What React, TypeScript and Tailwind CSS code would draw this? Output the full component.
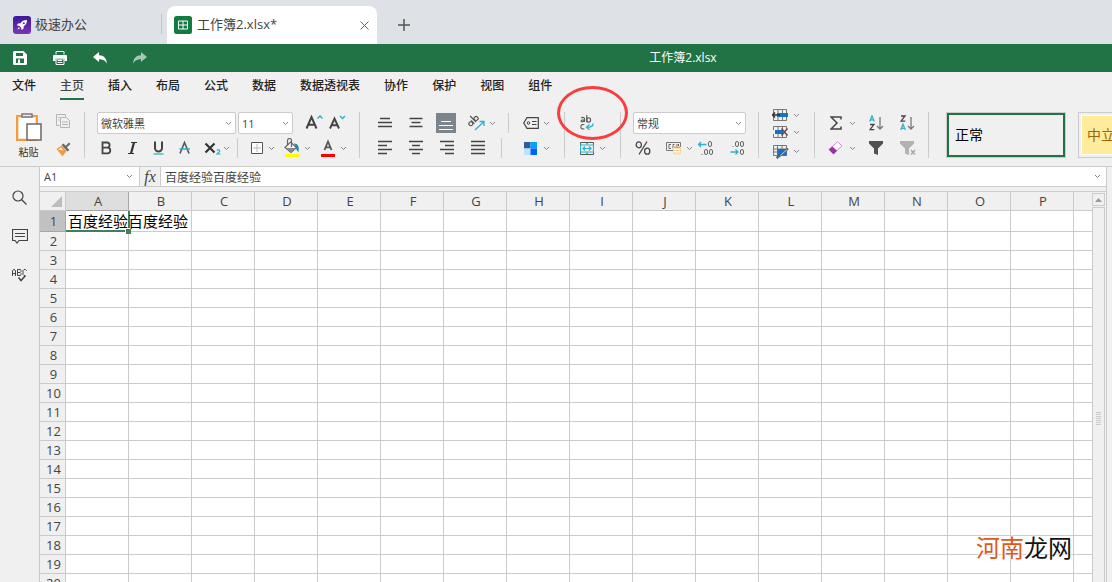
import type { ReactNode } from "react";

const menus = ["文件", "主页", "插入", "布局", "公式", "数据", "数据透视表", "协作", "保护", "视图", "组件"];
const columns = "ABCDEFGHIJKLMNOP".split("");
const rows = Array.from({ length: 20 }, (_, i) => i + 1);

function Chevron() {
  return (
    <svg className="h-[5px] w-[7px] shrink-0" viewBox="0 0 7 5" fill="none" stroke="#858585">
      <path d="M1 1l2.5 2.5L6 1" />
    </svg>
  );
}

function Separator({ short = false }: { short?: boolean }) {
  return <div className={short ? "h-5 w-px shrink-0 bg-[#cbcbcb]" : "h-[46px] w-px shrink-0 bg-[#cbcbcb]"} />;
}

function Tool({ label, className, children }: { label: string; className: string; children: ReactNode }) {
  return (
    <button type="button" aria-label={label} title={label} className={`flex shrink-0 items-center justify-center ${className}`}>
      {children}
    </button>
  );
}

/* icon plus its drop-down arrow */
function DropTool({ label, children }: { label: string; children: ReactNode }) {
  return (
    <button type="button" aria-label={label} title={label} className="flex w-7 shrink-0 items-center justify-between">
      {children}
      <Chevron />
    </button>
  );
}

function Picker({ label, options, className }: { label: string; options: string[]; className: string }) {
  return (
    <div className={`flex h-[22px] shrink-0 items-center rounded-xs border border-[#cbcbcb] bg-white pr-[3px] ${className}`}>
      <select aria-label={label} className="h-5 min-w-0 flex-1 appearance-none bg-transparent pt-px pl-[3px] text-[11px] leading-5 text-[#444] outline-none">
        {options.map((o) => (
          <option key={o}>{o}</option>
        ))}
      </select>
      <Chevron />
    </div>
  );
}

function Lines({ d, light = false }: { d: string; light?: boolean }) {
  return (
    <svg className="size-4" viewBox="0 0 16 16" fill="none" stroke={light ? "#fff" : "#444"} strokeWidth={light ? 1 : 1.3}>
      <path d={d} />
    </svg>
  );
}

function TabStrip() {
  return (
    <div className="flex h-11 items-end bg-[#dee1e6] text-[13px] text-[#444]">
      <div className="flex h-[38px] w-[161px] shrink-0 items-center gap-1 pl-[13px]">
        <svg className="size-[18px]" viewBox="0 0 18 18">
          <defs>
            <linearGradient id="brand" x1="0" y1="0" x2="0" y2="1">
              <stop offset="0" stopColor="#38189a" />
              <stop offset="1" stopColor="#7b35b5" />
            </linearGradient>
          </defs>
          <rect width="18" height="18" rx="3" fill="url(#brand)" />
          <path d="M14 4c-3 0-5 1-6.500 3.200L5 7.500 3.800 9.500l2.400.2 2 2L8.500 14l2-1.300.3-2.500C13 8.800 14 7 14 4z" fill="#fff" />
          <path d="M5.800 11L4.300 13.700 7 12.200z" fill="#fff" />
          <circle cx="10.800" cy="7.200" r="1" fill="#5a28a6" />
        </svg>
        <span>极速办公</span>
      </div>
      <div className="mb-[10px] h-5 w-px bg-[#bfc2c6]" />
      <div className="ml-[5px] flex h-[38px] w-[210px] shrink-0 items-center rounded-t-lg bg-white px-[7px]">
        <svg className="size-[18px]" viewBox="0 0 18 18">
          <rect width="18" height="18" rx="2.500" fill="#107c41" />
          <path d="M4.500 5h9v8h-9zM9 5v8M4.500 9h9" fill="none" stroke="#fff" />
        </svg>
        <span className="ml-[5px] flex-1">工作簿2.xlsx*</span>
        <button type="button" aria-label="关闭" className="flex w-3 justify-center">
          <svg className="size-[9px]" viewBox="0 0 9 9" stroke="#666" fill="none">
            <path d="M.5.5l8 8M8.500.5l-8 8" />
          </svg>
        </button>
      </div>
      <button type="button" aria-label="新建" className="ml-5 flex h-[38px] w-[14px] items-center justify-center">
        <svg className="size-3" viewBox="0 0 12 12" stroke="#555" strokeWidth="1.500">
          <path d="M6 0v12M0 6h12" />
        </svg>
      </button>
    </div>
  );
}

function TitleBar() {
  return (
    <div className="flex h-7 items-center bg-[#217346] text-white">
      <div className="flex w-[254px] shrink-0">
        <Tool label="保存" className="w-10">
          <svg className="size-[14px]" viewBox="0 0 14 14" fill="#fff">
            <path fillRule="evenodd" d="M1.500 0h9L14 3.500v9a1.500 1.500 0 0 1-1.500 1.500h-11A1.500 1.500 0 0 1 0 12.500v-11A1.500 1.500 0 0 1 1.500 0zM3 2v3h7V2zM3 7.500V12h2V8.500h2V12h4V7.500z" />
          </svg>
        </Tool>
        <Tool label="打印" className="w-10">
          <svg className="size-[14px]" viewBox="0 0 14 14">
            <path d="M3 3.500V.5h8v3" fill="none" stroke="#fff" />
            <path d="M0 5a1 1 0 0 1 1-1h12a1 1 0 0 1 1 1v5h-2.500V7.500h-9V10H0z" fill="#fff" />
            <path d="M3 8h8v5.500H3zM4.500 9.500h4.500M4.500 11.500h5" fill="none" stroke="#fff" />
          </svg>
        </Tool>
        <Tool label="撤销" className="w-10">
          <svg className="h-3 w-[14px]" viewBox="0 0 14 12" fill="#fff">
            <path d="M0 5l6-5v3.200c5 0 7.500 3 8 8.300C12 8.500 10 7.200 6 7.200V10z" />
          </svg>
        </Tool>
        <Tool label="恢复" className="w-10 opacity-60">
          <svg className="h-3 w-[14px]" viewBox="0 0 14 12" fill="#fff">
            <path d="M14 5L8 0v3.200C3 3.200.5 6.200 0 11.500 2 8.500 4 7.200 8 7.200V10z" />
          </svg>
        </Tool>
      </div>
      <h1 className="flex-1 text-center text-xs">工作簿2.xlsx</h1>
    </div>
  );
}

function MenuBar() {
  return (
    <nav className="flex h-8 gap-6 px-3 text-xs font-medium text-[#222]">
      {menus.map((m) => (
        <button
          key={m}
          type="button"
          className={
            m === "主页"
              ? "h-7 shrink-0 border-b-2 border-[#217346] pt-[2px] text-[#444]"
              : "h-7 shrink-0 border-b-2 border-transparent pt-[2px]"
          }
        >
          {m}
        </button>
      ))}
    </nav>
  );
}

function ClipboardGroup() {
  return (
    <div className="flex h-[50px] w-[84px] shrink-0 pl-[14px]">
      <button type="button" className="flex w-[29px] flex-col items-center text-[10px] leading-[18px] text-[#333]">
        <svg className="h-[31px] w-7 shrink-0" viewBox="0 0 28 31" fill="none">
          <path d="M2 4h20v24H2z" fill="#fff" stroke="#f09a4a" strokeWidth="2" />
          <path d="M3.500 5.500h17v21h-17z" stroke="#fbe3b5" />
          <path d="M7 5V2h10v3z" fill="#f0f0f0" stroke="#777" strokeWidth="1.500" />
          <path d="M12 12h14v16H12z" fill="#fff" stroke="#6a6a6a" strokeWidth="1.500" />
        </svg>
        粘贴
      </button>
      <div className="ml-3 flex flex-col gap-[10px]">
        <Tool label="复制" className="h-[18px] w-4">
          <svg className="h-[15px] w-4" viewBox="0 0 16 15" fill="none" stroke="#b5b5b5">
            <path d="M4.500 11.500h-3v-11h9v2" />
            <path d="M5.500 3.500h6l3 3v7h-9zM7 8h6M7 10.500h6M3 3.500h1.500M3 6h1.500" />
          </svg>
        </Tool>
        <Tool label="格式刷" className="h-[18px] w-4">
          <svg className="size-[15px]" viewBox="0 0 15 15">
            <path d="M.5 7l5-3.500 5 5.500-4 5.500z" fill="#f39a41" />
            <path d="M2 7.500l3-2 2.500 3z" fill="#fff3df" />
            <path d="M5.500 3l6 6.500 1.800-1.600-2.400-2.700L14.500 2 13 .5 9.700 3.700 7.500 1.500z" fill="#6a6a6a" />
          </svg>
        </Tool>
      </div>
    </div>
  );
}

function FontGroup() {
  return (
    <div className="flex w-[274px] shrink-0 flex-col gap-[3px] pl-3">
      <div className="flex h-[22px] items-center">
        <Picker label="字体" options={["微软雅黑", "宋体", "黑体"]} className="w-[139px]" />
        <Picker label="字号" options={["11", "12", "14"]} className="ml-[2px] w-[55px]" />
        <Tool label="增大字号" className="ml-[11px] w-5">
          <svg className="h-4 w-[18px]" viewBox="0 0 18 16" fill="none">
            <path d="M1.500 13.500L6.500 2l5 11.500M3.200 9.800h6.600" stroke="#444" strokeWidth="2" />
            <path d="M12.500 3.500L15 1l2.500 2.500" stroke="#2bb3c9" strokeWidth="1.500" />
          </svg>
        </Tool>
        <Tool label="减小字号" className="ml-[3px] w-5">
          <svg className="h-4 w-[18px]" viewBox="0 0 18 16" fill="none">
            <path d="M2 13.500L6.500 3.500 11 13.500M3.500 10.300h6" stroke="#444" strokeWidth="1.900" />
            <path d="M12 1l2.500 2.500L17 1" stroke="#2bb3c9" strokeWidth="1.500" />
          </svg>
        </Tool>
      </div>
      <div className="flex h-[22px] items-center">
        <Tool label="加粗" className="w-[18px]">
          <svg className="size-[14px]" viewBox="0 0 14 14" fill="none" stroke="#444" strokeWidth="1.800">
            <path d="M3.500 1.500H8a2.500 2.500 0 0 1 0 5.200H3.500zM3.500 6.700h5a2.800 2.800 0 0 1 0 5.600h-5z" />
          </svg>
        </Tool>
        <Tool label="倾斜" className="ml-2 w-[18px]">
          <svg className="size-[14px]" viewBox="0 0 14 14" fill="none" stroke="#333">
            <path d="M6 1.500h6M3 12.500h6" />
            <path d="M9 1.500l-3 11" strokeWidth="2.200" />
          </svg>
        </Tool>
        <Tool label="下划线" className="ml-2 w-[18px]">
          <svg className="size-[14px]" viewBox="0 0 14 14" fill="none">
            <path d="M4 .5v6.500a3.500 3.500 0 0 0 7 0V.5" stroke="#444" strokeWidth="2" />
            <path d="M2.500 13h10" stroke="#2bb3c9" strokeWidth="1.300" />
          </svg>
        </Tool>
        <Tool label="删除线" className="ml-2 w-[18px]">
          <svg className="size-[14px]" viewBox="0 0 14 14" fill="none">
            <path d="M3 12.500L7.500 1.500 12 12.500" stroke="#555" strokeWidth="1.600" />
            <path d="M2.500 8h10.500" stroke="#2bb3c9" strokeWidth="1.500" />
          </svg>
        </Tool>
        <button type="button" aria-label="下标" className="ml-[11px] flex w-[26px] items-center justify-between">
          <svg className="h-[14px] w-[18px]" viewBox="0 0 18 14" fill="none">
            <path d="M1.500 2.500l9 9M10.500 2.500l-9 9" stroke="#333" strokeWidth="2.200" />
            <path d="M13 9.500c1-1.200 3-.6 2.700.7-.2.900-1.700 1.600-2.700 2.800h3.500" stroke="#2bb3c9" strokeWidth="1.200" />
          </svg>
          <Chevron />
        </button>
        <div className="ml-[7px]">
          <Separator short />
        </div>
        <button type="button" aria-label="边框" className="ml-[13px] flex w-6 items-center justify-between">
          <svg className="size-3" viewBox="0 0 12 12" fill="none">
            <path d="M.5.5h11v11H.5z" fill="#fff" stroke="#555" />
            <path d="M6 2v8M2 6h8" stroke="#bbb" />
          </svg>
          <Chevron />
        </button>
        <button type="button" aria-label="填充颜色" className="ml-[9px] flex w-[27px] items-center justify-between">
          <svg className="h-5 w-4 shrink-0" viewBox="0 0 16 20" fill="none">
            <path d="M1 16h14v3H1z" fill="#ff0" />
            <path d="M1 9.500L6.500 4l6 5.500L7 14.500z" fill="#f2f2f2" stroke="#666" strokeWidth="1.200" />
            <path d="M2 10h9.500L7 14z" fill="#888" />
            <path d="M3.500 7V2.500a2 2 0 0 1 4 0V9" stroke="#666" strokeWidth="1.200" />
            <path d="M10 5.500c4 0 5.500 3 4.500 8.500-1.500-1-2.500-3-2.500-5z" fill="#1a8a9c" />
          </svg>
          <Chevron />
        </button>
        <button type="button" aria-label="字体颜色" className="ml-[10px] flex w-[26px] items-center justify-between">
          <svg className="h-5 w-[14px]" viewBox="0 0 14 20" fill="none">
            <path d="M3.500 12L7 3.500l3.500 8.500M4.500 9.300h5" stroke="#555" strokeWidth="1.800" />
            <path d="M0 16h14v3H0z" fill="red" />
          </svg>
          <Chevron />
        </button>
      </div>
    </div>
  );
}

function AlignGroup() {
  return (
    <div className="flex w-[163px] shrink-0 flex-col gap-[3px] pl-[15px]">
      <div className="flex h-[22px] items-center">
        <Tool label="顶端对齐" className="w-5">
          <Lines d="M3 3.500h10M1 7.500h14M1 11.500h14" />
        </Tool>
        <Tool label="垂直居中" className="ml-[11px] w-5">
          <Lines d="M1.500 3.500h13M3.500 7.500h9M1.500 11.500h13" />
        </Tool>
        <Tool label="底端对齐" className="ml-[10px] size-5 bg-[#7d858c]">
          <Lines light d="M3 6.500h10M1 10.500h14M1 14.500h14" />
        </Tool>
        <button type="button" aria-label="方向" className="ml-3 flex w-7 items-center justify-between">
          <svg className="h-4 w-[17px]" viewBox="0 0 17 16" fill="none">
            <g transform="rotate(-45 6 7)" stroke="#555" strokeWidth="1.200">
              <circle cx="2.500" cy="6" r="2" />
              <path d="M5 3.700v4.800M7.500 0v8.500" />
              <circle cx="10" cy="6" r="2" />
            </g>
            <path d="M7 15l8.500-8M11.500 6.500h4.500V11" stroke="#2bb3c9" strokeWidth="1.300" />
          </svg>
          <Chevron />
        </button>
        <div className="ml-3">
          <Separator short />
        </div>
      </div>
      <div className="flex h-[22px] items-center">
        <Tool label="左对齐" className="w-5">
          <Lines d="M1 1.500h14M1 5.500h9M1 9.500h14M1 13.500h9" />
        </Tool>
        <Tool label="居中" className="ml-[11px] w-5">
          <Lines d="M1 1.500h14M4 5.500h8M1 9.500h14M4 13.500h8" />
        </Tool>
        <Tool label="右对齐" className="ml-[11px] w-5">
          <Lines d="M1 1.500h14M6 5.500h9M1 9.500h14M6 13.500h9" />
        </Tool>
        <Tool label="两端对齐" className="ml-[11px] w-5">
          <Lines d="M1 1.500h14M1 5.500h14M1 9.500h14M1 13.500h14" />
        </Tool>
        <div className="ml-[13px]">
          <Separator short />
        </div>
      </div>
    </div>
  );
}

function FormatGroup() {
  return (
    <div className="flex w-[41px] shrink-0 flex-col gap-[3px]">
      <button type="button" aria-label="单元格样式" className="flex h-[22px] w-[27px] items-center justify-between">
        <svg className="h-3 w-4" viewBox="0 0 16 12" fill="none" stroke="#444">
          <path d="M.7 6L4 .7h11.300v10.600H4z" strokeWidth="1.200" />
          <circle cx="5.500" cy="6" r="1.300" />
          <path d="M9 4.500h4.500M9 7.500h4.500" />
        </svg>
        <Chevron />
      </button>
      <button type="button" aria-label="配色" className="flex h-[22px] w-[27px] items-center justify-between">
        <svg className="ml-px h-[13px] w-[13px]" viewBox="0 0 13 13">
          <path d="M0 0h6.500v6.500H0z" fill="#2c5ba0" />
          <path d="M6.500 0H13v6.500H6.500z" fill="#00a2ff" />
          <path d="M0 6.500h6.500V13H0z" fill="#b9e2ff" />
          <path d="M6.500 6.500H13V13H6.500z" fill="#0063ff" />
        </svg>
        <Chevron />
      </button>
    </div>
  );
}

function WrapGroup() {
  return (
    <div className="relative flex w-[55px] shrink-0 flex-col gap-[3px] pl-[15px]">
      <Tool label="自动换行" className="h-[22px] w-[14px]">
        <svg className="h-4 w-[14px]" viewBox="0 0 14 16" fill="none">
          <g stroke="#555" strokeWidth="1.100">
            <path d="M1.300 3c.9-.9 3.200-.8 3.200.7V7M4.500 4.800c-4-.2-4.200 2.300-1.900 2 .9-.1 1.900-.9 1.900-1.700M6.800 0v7.200" />
            <ellipse cx="8.700" cy="4.900" rx="1.900" ry="2.200" />
            <path d="M4.300 9.800c-1.900-.8-3.500.2-3.500 2s1.700 2.800 3.500 1.900" />
          </g>
          <path d="M13 8.500c.3 2.500-2 3.800-6.500 3.800M9.500 9.500l-3 2.800 3 2.500" stroke="#2bb3c9" strokeWidth="1.300" />
        </svg>
      </Tool>
      <button type="button" aria-label="合并居中" className="flex h-[22px] w-[26px] items-center justify-between">
        <svg className="h-[13px] w-[14px]" viewBox="0 0 14 13" fill="none">
          <path d="M.5.5h13v12H.5zM7 .5v2M7 10.500v2" stroke="#555" />
          <path d="M.5 3h13v7H.5zM3 6.500h8M5 4.500l-2 2 2 2M9 4.500l2 2-2 2" stroke="#2bb3c9" strokeWidth="1.200" />
        </svg>
        <Chevron />
      </button>
      {/* callout ring round the wrap button */}
      <div className="pointer-events-none absolute -top-[26px] -left-[8px] h-[54px] w-[71px] rounded-[50%] border-3 border-[#fa3c3c]" />
    </div>
  );
}

function NumberGroup() {
  return (
    <div className="flex w-[137px] shrink-0 flex-col gap-[3px] pl-3">
      <Picker label="数字格式" options={["常规", "数值", "货币"]} className="w-[113px]" />
      <div className="flex h-[22px] items-center">
        <Tool label="百分比" className="ml-[2px] w-4">
          <svg className="h-[14px] w-4" viewBox="0 0 16 14" fill="none" stroke="#444" strokeWidth="1.300">
            <ellipse cx="3.800" cy="3.800" rx="2.600" ry="3" />
            <ellipse cx="12.200" cy="10.200" rx="2.600" ry="3" />
            <path d="M12 .5l-8 13" />
          </svg>
        </Tool>
        <button type="button" aria-label="货币" className="ml-[15px] flex w-[27px] items-center justify-between">
          <svg className="h-[14px] w-4" viewBox="0 0 16 14" fill="none">
            <path d="M.5 1.500h14v8H.5z" stroke="#777" />
            <path d="M5 3.500H3v4h2M8.500 3.500H7v4h1.500M11 3v3M12.500 3v2" stroke="#666" />
            <path d="M7.500 6h7v7h-7z" fill="#fff" stroke="#f7d9a6" />
            <path d="M8 6.500h6" stroke="#f59a20" strokeWidth="1.500" />
            <path d="M8 9.500h6M8 12h6" stroke="#f8cf8d" />
          </svg>
          <Chevron />
        </button>
        <Tool label="增加小数位" className="ml-[5px] w-4">
          <svg className="h-4 w-4" viewBox="0 0 16 16" fill="none" stroke="#666">
            <rect x="10.500" y="1.500" width="3" height="5" rx="1.500" />
            <rect x="6.500" y="9.500" width="3" height="5" rx="1.500" />
            <rect x="11.500" y="9.500" width="3" height="5" rx="1.500" />
            <path d="M3.500 14.500h1" />
            <path d="M.5 4.500H8.500M3 2L.5 4.500 3 7" stroke="#2bb3c9" strokeWidth="1.300" />
          </svg>
        </Tool>
        <Tool label="减少小数位" className="ml-[15px] w-4">
          <svg className="h-4 w-4" viewBox="0 0 16 16" fill="none" stroke="#666">
            <rect x="6.500" y="1.500" width="3" height="5" rx="1.500" />
            <rect x="11.500" y="1.500" width="3" height="5" rx="1.500" />
            <rect x="11.500" y="9.500" width="3" height="5" rx="1.500" />
            <path d="M3.500 6.500h1" />
            <path d="M1.500 12H9M6.500 9.500L9 12l-2.500 2.500" stroke="#2bb3c9" strokeWidth="1.300" />
          </svg>
        </Tool>
      </div>
    </div>
  );
}

function CellsGroup() {
  return (
    <div className="-mt-1 flex w-[55px] shrink-0 flex-col gap-[3px] pl-[13px]">
      <button type="button" aria-label="插入单元格" className="flex h-[14px] w-7 items-center justify-between">
        <svg className="h-3 w-[17px]" viewBox="0 0 17 12" fill="none">
          <path d="M1.500.5h13v11h-13zM6 .5v11M10.500 .5v11" stroke="#777" />
          <path d="M5 4h11v4H5z" fill="#1672c8" />
          <path d="M0 6h8M3 3.500L.5 6 3 8.500" stroke="#333" strokeWidth="1.500" />
        </svg>
        <Chevron />
      </button>
      <button type="button" aria-label="删除单元格" className="flex h-[14px] w-7 items-center justify-between">
        <svg className="h-3 w-[17px]" viewBox="0 0 17 12" fill="none">
          <path d="M1.500 4V.5h13V4M6 .5V4M10.500 .5V4M1.500 8v3.500h13V8M6 8v3.500M10.500 8v3.500" stroke="#777" />
          <path d="M3 4h8v4H3z" fill="#1672c8" />
          <path d="M9.500 2.500l6 7M15.500 2.500l-6 7" stroke="#704848" strokeWidth="1.500" />
        </svg>
        <Chevron />
      </button>
      <button type="button" aria-label="格式" className="mt-px flex h-4 w-7 items-center justify-between">
        <svg className="h-[15px] w-[17px]" viewBox="0 0 17 15" fill="none">
          <path d="M1.500 1.500h13v10h-13zM5.500 1.500v10M10 1.500v10M1.500 5h13M1.500 8h13" stroke="#777" />
          <path d="M5.500 5h9v6.500h-9z" fill="#1672c8" />
          <path d="M16 4.500L9 11l-4.500 3" stroke="#4a6478" strokeWidth="2.200" />
          <path d="M15 5.500L8.500 11.500" stroke="#b8d4ea" />
        </svg>
        <Chevron />
      </button>
    </div>
  );
}

function SortIcon({ flip = false }: { flip?: boolean }) {
  const a = "M.7 6.500L3 .8l2.300 5.700M1.500 4.800h3";
  const z = "M1 1h4L1 6.200h4.300";
  return (
    <svg className="h-4 w-[15px]" viewBox="0 0 15 16" fill="none" strokeWidth="1.300">
      <path d={flip ? z : a} stroke={flip ? "#444" : "#2bb3c9"} />
      <path d={flip ? a : z} transform="translate(0 8.500)" stroke={flip ? "#2bb3c9" : "#444"} />
      <path d="M11 2v12M8 11l3 3 3-3" stroke="#777" />
    </svg>
  );
}

function EditGroup() {
  return (
    <div className="flex w-[113px] shrink-0 flex-col gap-[3px] pl-[13px]">
      <div className="flex h-[22px] items-center">
        <DropTool label="求和">
          <svg className="ml-[2px] h-[14px] w-3" viewBox="0 0 12 14" fill="none" stroke="#444" strokeWidth="1.500">
            <path d="M11 3.500V1H1l6 6-6 6h10v-2.500" />
          </svg>
        </DropTool>
        <Tool label="升序" className="ml-[13px] w-[15px]">
          <SortIcon />
        </Tool>
        <Tool label="降序" className="ml-4 w-[15px]">
          <SortIcon flip />
        </Tool>
      </div>
      <div className="flex h-[22px] items-center">
        <DropTool label="清除">
          <svg className="h-[14px] w-[15px]" viewBox="0 0 15 14">
            <path d="M1 8.500L9.500.8l4.500 4L5.500 13z" fill="#fff" stroke="#d18ad6" />
            <path d="M.8 8.500l3.500-3 4.800 4.200-3.600 3.600z" fill="#9b2fa3" />
          </svg>
        </DropTool>
        <Tool label="筛选" className="ml-3 w-[15px]">
          <svg className="size-[14px]" viewBox="0 0 14 14" fill="#505050">
            <path d="M0 0h14v2.500L9 7.500V14L5 12.500v-5L0 2.500z" />
          </svg>
        </Tool>
        <Tool label="清除筛选" className="ml-4 w-[17px]">
          <svg className="h-[14px] w-4" viewBox="0 0 16 14" fill="#b2b2b2">
            <path d="M0 0h14v2.500L9 7.500V14L5 12.500v-5L0 2.500z" />
            <path d="M11 9l4 4.500M15 9l-4 4.500" stroke="#a5a5a5" strokeWidth="1.300" />
          </svg>
        </Tool>
      </div>
    </div>
  );
}

function Ribbon() {
  return (
    <div className="flex h-[63px] items-start border-b border-[#cbcbcb] pt-2">
      <ClipboardGroup />
      <Separator />
      <FontGroup />
      <Separator />
      <AlignGroup />
      <FormatGroup />
      <Separator />
      <WrapGroup />
      <Separator />
      <NumberGroup />
      <Separator />
      <CellsGroup />
      <Separator />
      <EditGroup />
      <Separator />
      <div className="ml-[17px] flex gap-3 text-sm">
        <button type="button" className="h-[46px] w-[120px] shrink-0 border border-[#cbcbcb] text-left text-black">
          <span className="flex h-11 items-center border-2 border-[#217346] pl-[6px]">正常</span>
        </button>
        <button type="button" className="h-[46px] w-[120px] shrink-0 border border-[#cbcbcb] p-[2px] text-left text-[#9c6500]">
          <span className="flex h-10 items-center border border-white bg-[#ffeb9c] pl-[5px]">中立</span>
        </button>
      </div>
    </div>
  );
}

function SideBar() {
  return (
    <aside className="flex w-10 shrink-0 flex-col items-center gap-[23px] border-r border-[#cbcbcb] pt-[22px]">
      <Tool label="查找" className="size-4">
        <svg className="size-[15px]" viewBox="0 0 15 15" fill="none" stroke="#444" strokeWidth="1.200">
          <circle cx="6" cy="6" r="5" />
          <path d="M9.500 9.500l5 5" />
        </svg>
      </Tool>
      <Tool label="批注" className="size-4">
        <svg className="h-[15px] w-4" viewBox="0 0 16 15" fill="none" stroke="#444">
          <path d="M.5.5h15v11H7L5 14l-2-2.500H.5zM3 4.500h10M3 7.500h10" strokeWidth="1.200" />
        </svg>
      </Tool>
      <Tool label="拼写检查" className="size-4">
        <svg className="h-[13px] w-[15px]" viewBox="0 0 15 13" fill="none" stroke="#444">
          <path d="M.5 7V2l1-1.500h1l1 1.500v5M.5 4.500h3M5.500 6.500v-6h3l.5 1v1L8 3.500l1 1v1l-.5 1h-3M5.500 3.500H8M14.500 2V1.500l-1-1h-1.500L11 1.500v4l1 1h1" />
          <path d="M6.500 8.500l2.500 3 4.500-5" strokeWidth="1.500" />
        </svg>
      </Tool>
    </aside>
  );
}

function FormulaBar() {
  return (
    <div className="flex h-5 shrink-0 border-b border-[#cbcbcb] bg-white">
      <div className="flex w-[100px] shrink-0 items-center border-r border-[#cbcbcb] pr-[6px]">
        <input aria-label="名称框" defaultValue="A1" className="h-[19px] min-w-0 flex-1 pl-1 text-[11px] text-[#444] outline-none" />
        <Chevron />
      </div>
      <button type="button" aria-label="插入函数" className="w-[21px] shrink-0 border-r border-[#cbcbcb] bg-[#f0f0f0] font-['Liberation_Serif',serif] text-base leading-4 text-[#444] italic">
        fx
      </button>
      <input aria-label="编辑栏" defaultValue="百度经验百度经验" className="h-[19px] min-w-0 flex-1 pl-1 text-xs text-[#444] outline-none" />
      <div className="flex w-3 items-center">
        <Chevron />
      </div>
    </div>
  );
}

function Sheet() {
  return (
    <table className="w-full table-fixed border-separate border-spacing-0 bg-white font-['Open_Sans','Noto_Sans_CJK_SC',sans-serif] text-[13px] leading-[18px] text-[#444]">
      <colgroup>
        <col className="w-[26px]" />
        {columns.map((c) => (
          <col key={c} className="w-[63px]" />
        ))}
        <col />
      </colgroup>
      <thead>
        <tr className="h-[19px] bg-[#f0f0f0]">
          <th className="border-r border-b border-[#cbcbcb] p-0">
            <svg className="ml-[11px] size-[11px]" viewBox="0 0 11 11" fill="#bdbdbd">
              <path d="M11 0v11H0z" />
            </svg>
          </th>
          {columns.map((c) => (
            <th
              key={c}
              className={
                c === "A"
                  ? "border-r border-b border-[#a5a5a5] bg-[#dedede] p-0 pl-[2px] font-normal"
                  : "border-r border-b border-[#cbcbcb] p-0 pl-[2px] font-normal"
              }
            >
              {c}
            </th>
          ))}
          <th className="border-b border-[#cbcbcb] p-0" />
        </tr>
      </thead>
      <tbody>
        {rows.map((r) => (
          <tr key={r} className={r === 1 ? "h-[21px]" : "h-[19px]"}>
            <th
              className={
                r === 1
                  ? "border-r border-b border-[#a5a5a5] bg-[#c1c1c1] p-0 pl-[2px] font-normal"
                  : "border-r border-b border-[#cbcbcb] bg-[#f0f0f0] p-0 pl-[2px] font-normal"
              }
            >
              {r}
            </th>
            {columns.map((c) =>
              r === 1 && c === "A" ? (
                <td key={c} className="relative border-r border-b border-[#cbcbcb] p-0 pl-[2px] text-[15px] leading-5 whitespace-nowrap text-black">
                  <span className="absolute top-0 -right-[2px] -bottom-px left-0 border-r-2 border-b-2 border-[#447d5c]" />
                  <span className="absolute -right-[3px] -bottom-[3px] size-[6px] border-t border-l border-white bg-[#447d5c]" />
                  <span className="relative">百度经验百度经验</span>
                </td>
              ) : (
                <td key={c} className="border-r border-b border-[#cbcbcb] p-0" />
              )
            )}
            <td className="border-b border-[#cbcbcb] p-0" />
          </tr>
        ))}
      </tbody>
    </table>
  );
}

function ScrollBar() {
  return (
    <div className="flex w-[14px] shrink-0 flex-col gap-px pt-px pr-px">
      <button type="button" aria-label="向上滚动" className="flex h-[13px] shrink-0 items-center justify-center border border-[#cbcbcb]">
        <svg className="h-1 w-[7px]" viewBox="0 0 7 4" fill="#999">
          <path d="M3.500 0L7 4H0z" />
        </svg>
      </button>
      <div className="flex flex-1 justify-center border border-b-0 border-[#cbcbcb] pt-[35vh]">
        <svg className="h-[13px] w-[5px]" viewBox="0 0 5 13" stroke="#cbcbcb">
          <path d="M0 .5h5M0 2.500h5M0 4.500h5M0 6.500h5M0 8.500h5M0 10.500h5M0 12.500h5" />
        </svg>
      </div>
    </div>
  );
}

export default function App() {
  return (
    <div className="relative flex h-screen flex-col overflow-hidden bg-[#f0f0f0] font-['Open_Sans','Noto_Sans_CJK_SC',sans-serif]">
      <header className="shrink-0">
        <TabStrip />
        <TitleBar />
        <MenuBar />
        <Ribbon />
      </header>
      <div className="flex min-h-0 flex-1 pr-[5px]">
        <SideBar />
        <main className="flex min-w-0 flex-1 flex-col border-r border-[#cbcbcb]">
          <FormulaBar />
          <div className="mt-1 flex min-h-0 flex-1 border-t border-[#cbcbcb]">
            <div className="min-w-0 flex-1 overflow-hidden">
              <Sheet />
            </div>
            <ScrollBar />
          </div>
        </main>
      </div>
      <p className="pointer-events-none absolute right-10 bottom-4 text-2xl leading-9 text-[#111] [text-shadow:0_0_2px_#fff,0_0_2px_#fff,0_0_3px_#fff]">
        <span className="text-[#dd5a1c]">河南</span>龙网
      </p>
    </div>
  );
}
